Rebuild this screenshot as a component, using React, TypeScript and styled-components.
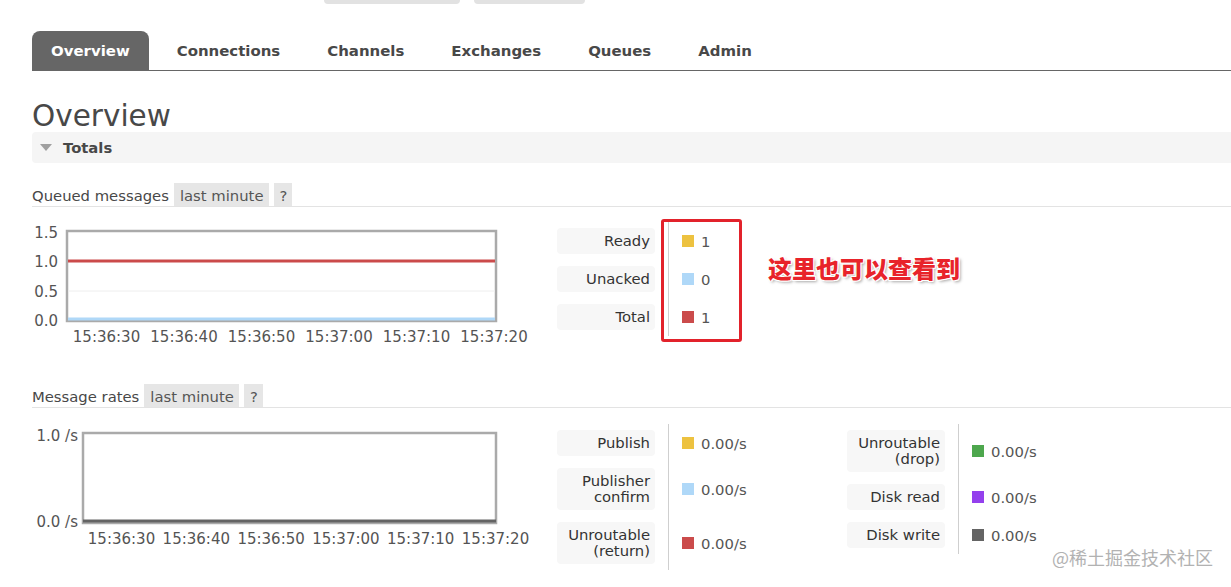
import React from 'react';
import styled, { createGlobalStyle } from 'styled-components';

const GlobalStyle = createGlobalStyle`
  html, body {
    margin: 0;
    padding: 0;
    background: #fff;
  }
  body {
    font-family: "DejaVu Sans", Verdana, sans-serif;
    font-size: 14.8px;
    color: #484848;
  }
`;

const Page = styled.div`
  position: relative;
  width: 1231px;
  height: 587px;
  overflow: hidden;
  padding-left: 32px;
  box-sizing: border-box;
`;

const TopStrip = styled.div`
  display: flex;
  gap: 14px;
  height: 31px;
  padding-left: 292px;
`;

const TopPill = styled.div<{ $w: number }>`
  width: ${(p) => p.$w}px;
  height: 4px;
  background: #e2e2e2;
  border-radius: 0 0 8px 8px;
`;

const Tabs = styled.ul`
  display: flex;
  margin: 0;
  padding: 0;
  list-style: none;
  border-bottom: 1px solid #666;
`;

const Tab = styled.li<{ $active?: boolean }>`
  height: 39px;
  line-height: 40px;
  padding: 0 19px;
  margin-right: 9px;
  font-weight: bold;
  font-size: 14.95px;
  color: ${(p) => (p.$active ? '#fff' : '#484848')};
  background: ${(p) => (p.$active ? '#666' : 'transparent')};
  border-radius: 8px 8px 0 0;
`;

const Heading = styled.h1`
  height: 36px;
  margin: 25px 0 0;
  font-size: 29.5px;
  line-height: 40px;
  font-weight: normal;
  color: #484848;
`;

const TotalsBar = styled.div`
  display: flex;
  align-items: center;
  gap: 11px;
  height: 31px;
  padding-left: 8px;
  background: #f5f5f5;
  border-radius: 4px 0 0 4px;
  font-weight: bold;
`;

const Caret = styled.span`
  width: 0;
  height: 0;
  border-left: 6px solid transparent;
  border-right: 6px solid transparent;
  border-top: 7px solid #a0a0a0;
`;

const SectionHeader = styled.div<{ $top: number }>`
  display: flex;
  height: 23px;
  margin-top: ${(p) => p.$top}px;
  line-height: 25px;
  border-bottom: 1px solid #e3e3e3;
`;

const Badge = styled.span`
  height: 23px;
  margin-left: 5px;
  padding: 0 5px 0 6px;
  background: #e6e6e6;
  color: #555;
`;

const ChartRow = styled.div<{ $top: number }>`
  display: flex;
  align-items: flex-start;
  margin-top: ${(p) => p.$top}px;
`;

const ChartSvg = styled.svg`
  display: block;
  flex-shrink: 0;
  font-family: "DejaVu Sans", Verdana, sans-serif;
  font-size: 15px;
`;

const LegendWrap = styled.div`
  position: relative;
  display: flex;
  align-items: flex-start;
`;

const LegendTable = styled.div<{ $valueWidth: number }>`
  display: grid;
  grid-template-columns: 111px ${(p) => p.$valueWidth}px;
  align-content: start;
`;

const LabelCell = styled.div`
  display: flex;
  align-items: center;
  padding: 6px 13px 6px 0;
`;

const LabelBox = styled.div`
  width: 98px;
  box-sizing: border-box;
  padding: 5px 5px;
  line-height: 16px;
  text-align: right;
  color: #333;
  background: #f7f7f7;
  border-radius: 4px;
`;

const ValueCell = styled.div`
  display: flex;
  align-items: center;
  gap: 7px;
  padding: 1px 0 0 13px;
  border-left: 1px solid #cfcfcf;
  color: #555;
`;

const Swatch = styled.span<{ $color: string }>`
  width: 12px;
  height: 12px;
  margin-top: -1px;
  background: ${(p) => p.$color};
`;

const Highlight = styled.div`
  position: absolute;
  left: 104px;
  top: -3px;
  width: 81px;
  height: 123px;
  box-sizing: border-box;
  border: 3px solid #e2222b;
  border-radius: 3px;
`;

const Note = styled.div`
  position: absolute;
  left: 211px;
  top: 32px;
  white-space: nowrap;
  font-family: "Noto Sans CJK SC", sans-serif;
  font-size: 24px;
  font-weight: 900;
  line-height: 28px;
  color: #e8232a;
  text-shadow: 1px 1px 0 #fff, -1px -1px 0 #fff, 1px -1px 0 #fff, -1px 1px 0 #fff,
    2px 2px 3px rgba(0, 0, 0, 0.35);
`;

const Watermark = styled.div`
  position: absolute;
  right: 18px;
  bottom: 17px;
  font-family: "Noto Sans CJK SC", sans-serif;
  font-size: 18px;
  color: #b2b2b2;
`;

interface LegendRow {
  label: string[];
  color: string;
  value: string;
}

const Legend: React.FC<{ rows: LegendRow[]; valueWidth: number }> = ({ rows, valueWidth }) => (
  <LegendTable $valueWidth={valueWidth}>
    {rows.map((r) => (
      <React.Fragment key={r.label.join(' ')}>
        <LabelCell>
          <LabelBox>
            {r.label.map((l, i) => (
              <div key={i}>{l}</div>
            ))}
          </LabelBox>
        </LabelCell>
        <ValueCell>
          <Swatch $color={r.color} />
          {r.value}
        </ValueCell>
      </React.Fragment>
    ))}
  </LegendTable>
);

const times = ['15:36:30', '15:36:40', '15:36:50', '15:37:00', '15:37:10', '15:37:20'];

const QueuedChart = () => (
  <ChartSvg width={525} height={126}>
    <rect x={35} y={9} width={429} height={90} fill="#fff" stroke="#aaa" strokeWidth={2.5} />
    <line x1={36} x2={463} y1={69} y2={69} stroke="#eee" />
    <line x1={36} x2={463} y1={97} y2={97} stroke="#afd8f8" strokeWidth={3} />
    <line x1={36} x2={463} y1={39} y2={39} stroke="#cb4b4b" strokeWidth={3} />
    {[
      ['1.5', 11],
      ['1.0', 40],
      ['0.5', 70],
      ['0.0', 99],
    ].map(([t, y]) => (
      <text key={t} x={26} y={y as number} textAnchor="end" dominantBaseline="central" fill="#545454">
        {t}
      </text>
    ))}
    {times.map((t, i) => (
      <text key={t} x={74.5 + i * 77.5} y={115} textAnchor="middle" dominantBaseline="central" fill="#545454">
        {t}
      </text>
    ))}
  </ChartSvg>
);

const RatesChart = () => (
  <ChartSvg width={525} height={126}>
    <rect x={51} y={9} width={413} height={90} fill="#fff" stroke="#aaa" strokeWidth={2.5} />
    <line x1={51} x2={464} y1={97} y2={97} stroke="#646464" strokeWidth={3} />
    <text x={46} y={12} textAnchor="end" dominantBaseline="central" fill="#545454">
      1.0 /s
    </text>
    <text x={46} y={98} textAnchor="end" dominantBaseline="central" fill="#545454">
      0.0 /s
    </text>
    {times.map((t, i) => (
      <text key={t} x={89.5 + i * 74.8} y={115} textAnchor="middle" dominantBaseline="central" fill="#545454">
        {t}
      </text>
    ))}
  </ChartSvg>
);

const queued: LegendRow[] = [
  { label: ['Ready'], color: '#edc240', value: '1' },
  { label: ['Unacked'], color: '#afd8f8', value: '0' },
  { label: ['Total'], color: '#cb4b4b', value: '1' },
];

const ratesLeft: LegendRow[] = [
  { label: ['Publish'], color: '#edc240', value: '0.00/s' },
  { label: ['Publisher', 'confirm'], color: '#afd8f8', value: '0.00/s' },
  { label: ['Unroutable', '(return)'], color: '#cb4b4b', value: '0.00/s' },
];

const ratesRight: LegendRow[] = [
  { label: ['Unroutable', '(drop)'], color: '#4da74d', value: '0.00/s' },
  { label: ['Disk read'], color: '#9440ed', value: '0.00/s' },
  { label: ['Disk write'], color: '#646464', value: '0.00/s' },
];

const tabs = ['Overview', 'Connections', 'Channels', 'Exchanges', 'Queues', 'Admin'];

export default function App() {
  return (
    <>
      <GlobalStyle />
      <Page>
        <TopStrip>
          <TopPill $w={136} />
          <TopPill $w={111} />
        </TopStrip>
        <Tabs>
          {tabs.map((t, i) => (
            <Tab key={t} $active={i === 0}>
              {t}
            </Tab>
          ))}
        </Tabs>
        <Heading>Overview</Heading>
        <TotalsBar>
          <Caret />
          Totals
        </TotalsBar>

        <SectionHeader $top={20}>
          Queued messages
          <Badge>last minute</Badge>
          <Badge>?</Badge>
        </SectionHeader>
        <ChartRow $top={15}>
          <QueuedChart />
          <LegendWrap>
            <Legend rows={queued} valueWidth={120} />
            <Highlight />
            <Note>这里也可以查看到</Note>
          </LegendWrap>
        </ChartRow>

        <SectionHeader $top={36}>
          Message rates
          <Badge>last minute</Badge>
          <Badge>?</Badge>
        </SectionHeader>
        <ChartRow $top={16}>
          <RatesChart />
          <LegendWrap>
            <Legend rows={ratesLeft} valueWidth={179} />
            <Legend rows={ratesRight} valueWidth={150} />
          </LegendWrap>
        </ChartRow>

        <Watermark>@稀土掘金技术社区</Watermark>
      </Page>
    </>
  );
}
